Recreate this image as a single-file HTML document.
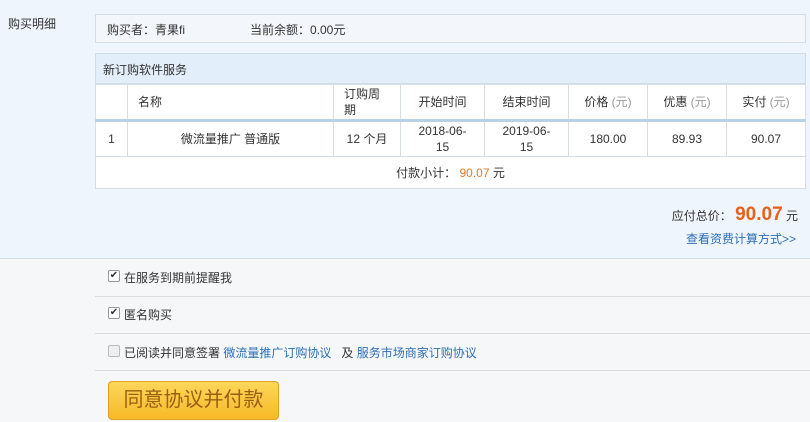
<html><head><style>
body{margin:0;width:810px;height:422px;background:#f6f7f9;font-family:"Liberation Sans","Noto Sans CJK SC",sans-serif;font-size:12px;color:#333;position:relative;overflow:hidden}
.a{position:absolute}
.top{left:0;top:0;width:810px;height:258px;background:#eef5fc;border-bottom:1px solid #d8dde3}
.box{border:1px solid #d3dde7;background:#f3f7fb}
table{border-collapse:collapse;position:absolute;left:95px;top:84px;width:711px;background:#fff;font-size:12px;table-layout:fixed}
td{border:1px solid #d7dde4;text-align:center;padding:0;line-height:16px}
.g{color:#999}
.line{left:95px;width:715px;height:1px;background:#dcdcdc}
.cb{width:10px;height:10px;border:1px solid #999;background:#fff;border-radius:2px;font-size:10px;line-height:10px;text-align:center;color:#333}
a{color:#2c6fb7;text-decoration:none}
</style></head><body>
<div class="a top"></div>
<div class="a" style="left:8px;top:15px">购买明细</div>
<div class="a box" style="left:95px;top:14px;width:709px;height:27px"></div>
<div class="a" style="left:107px;top:21px">购买者：青果fi</div>
<div class="a" style="left:250px;top:21px">当前余额：0.00元</div>
<div class="a" style="left:95px;top:53px;width:709px;height:29px;background:#e2eefa;border:1px solid #cfdbe7"></div>
<div class="a" style="left:103px;top:61px">新订购软件服务</div>
<table>
<colgroup><col style="width:32px"><col style="width:206px"><col style="width:67px"><col style="width:84px"><col style="width:84px"><col style="width:79px"><col style="width:79px"><col></colgroup>
<tr style="height:36px"><td></td><td style="text-align:left;padding-left:10px">名称</td><td style="text-align:left;padding-left:10px">订购周<br>期</td><td>开始时间</td><td>结束时间</td><td>价格 <span class="g">(元)</span></td><td>优惠 <span class="g">(元)</span></td><td>实付 <span class="g">(元)</span></td></tr>
<tr style="height:36px;border-top:3px solid #b8d0e8"><td>1</td><td>微流量推广 普通版</td><td>12 个月</td><td>2018-06-<br>15</td><td>2019-06-<br>15</td><td>180.00</td><td>89.93</td><td>90.07</td></tr>
<tr style="height:32px"><td colspan="8">付款小计： <span style="color:#e07b2a">90.07</span> 元</td></tr>
</table>
<div class="a" style="right:12px;top:204px;font-size:12px">应付总价： <b style="color:#e8601c;font-size:19px">90.07</b> 元</div>
<div class="a" style="right:14px;top:230px"><a>查看资费计算方式&gt;&gt;</a></div>
<div class="a cb" style="left:108px;top:270px">✔</div><div class="a" style="left:124px;top:269px">在服务到期前提醒我</div>
<div class="a line" style="top:296px"></div>
<div class="a cb" style="left:108px;top:307px">✔</div><div class="a" style="left:124px;top:306px">匿名购买</div>
<div class="a line" style="top:333px"></div>
<div class="a cb" style="left:108px;top:345px;background:#eee;border-color:#bbb"></div><div class="a" style="left:124px;top:344px">已阅读并同意签署 <a>微流量推广订购协议</a> &nbsp; 及 <a>服务市场商家订购协议</a></div>
<div class="a line" style="top:370px"></div>
<div class="a" style="left:108px;top:381px;width:169px;height:37px;border:1px solid #e0a020;border-radius:4px;background:linear-gradient(#fdd65a,#f7b928);color:#9a5f10;font-size:20px;line-height:37px;text-align:center">同意协议并付款</div>
</body></html>
